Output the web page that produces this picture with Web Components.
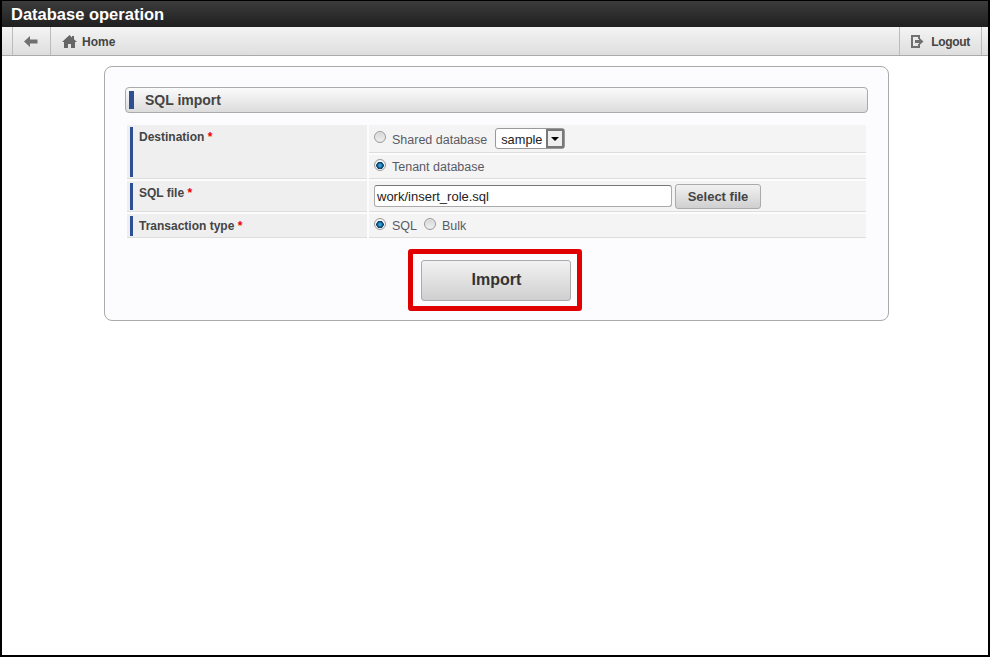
<!DOCTYPE html>
<html lang="en">
<head>
  <meta charset="UTF-8">
  <title>Database operation</title>
  <style type="text/css">
    html, body { margin: 0; height: 100%; background: #fff; }
    body { font-family: "Liberation Sans", Arial, sans-serif; }
  </style>
</head>
<body>
  <app-shell>
    <title-bar slot="top">Database operation</title-bar>
    <tool-bar slot="top">
      <tool-button slot="left" icon="back"></tool-button>
      <tool-button slot="left" icon="home">Home</tool-button>
      <tool-button slot="right" icon="logout" style="--gap: 7px; letter-spacing: -.3px">Logout</tool-button>
    </tool-bar>
    <form-card>
      <section-title slot="title">SQL import</section-title>
      <form-row required>
        <span slot="label">Destination</span>
        <form-line style="--text-shift: 2px">
          <radio-option>Shared database</radio-option>
          <combo-box>sample</combo-box>
        </form-line>
        <form-line short>
          <radio-option checked>Tenant database</radio-option>
        </form-line>
      </form-row>
      <form-row required>
        <span slot="label">SQL file</span>
        <form-line tall>
          <text-box>work/insert_role.sql</text-box>
          <push-button>Select file</push-button>
        </form-line>
      </form-row>
      <form-row required>
        <span slot="label">Transaction type</span>
        <form-line short>
          <radio-option checked>SQL</radio-option>
          <radio-option>Bulk</radio-option>
        </form-line>
      </form-row>
      <highlight-box slot="actions">
        <push-button size="large">Import</push-button>
      </highlight-box>
    </form-card>
  </app-shell>

  <script type="text/javascript">
    const ICONS = {
      back: `<svg width="14" height="11" viewBox="0 0 14 11"><path fill="#707070" d="M0 5.5 6 0v3.5h7.5v4H6V11z"/></svg>`,
      home: `<svg width="15" height="13" viewBox="0 0 15 13"><path fill="#666" d="M7.5 0 10 2.4V1h2v3.3L15 7h-2v6H9V9H6v4H2V7H0z"/></svg>`,
      logout: `<svg width="13" height="13" viewBox="0 0 13 13"><path fill="#707070" d="M0 0h9v4H7V2H2v9h5V9h2v4H0z"/><path fill="#707070" d="M4 5h4V2.5l4.5 4-4.5 4V8H4z"/></svg>`
    }

    function define(name, template) {
      customElements.define(name, class extends HTMLElement {
        constructor() {
          super()
          this.attachShadow({ mode: "open" }).innerHTML = typeof template === "function" ? template(this) : template
        }
      })
    }

    define("app-shell", `
      <style>
        :host { display: flex; flex-direction: column; box-sizing: border-box; height: 657px; border: 2px solid #000; border-top-width: 1px; overflow: hidden; }
        main { flex: 1; padding: 10px 99px 0 102px; }
      </style>
      <slot name="top"></slot>
      <main><slot></slot></main>
    `)

    define("title-bar", `
      <style>
        :host { display: block; height: 26px; box-sizing: border-box; padding: 3px 9px 0; background: linear-gradient(#3c3c3c, #1f1f1f); color: #fff; font: bold 16.5px/20px "Liberation Sans", Arial, sans-serif; }
      </style>
      <slot></slot>
    `)

    define("tool-bar", `
      <style>
        :host { display: flex; justify-content: space-between; height: 29px; box-sizing: border-box; padding: 0 6px 0 10px; background: linear-gradient(#f4f4f4, #dedede); border-bottom: 1px solid #aaa; }
        div { display: flex; }
      </style>
      <div><slot name="left"></slot></div>
      <div><slot name="right"></slot></div>
    `)

    define("tool-button", el => `
      <style>
        :host { display: flex; align-items: center; gap: var(--gap, 5px); padding: 1px 11px 0; border-left: 1px solid #bbb; color: #444; font: bold 12px "Liberation Sans", Arial, sans-serif; }
        :host(:last-child) { border-right: 1px solid #bbb; }
        :host([icon="back"]) { padding: 1px 12px 0 11px; }
        svg { display: block; }
      </style>
      ${ICONS[el.getAttribute("icon")]}<slot></slot>
    `)

    define("form-card", `
      <style>
        :host { display: block; box-sizing: border-box; width: 785px; height: 255px; padding: 20px 20px 0; background: #fcfcff; border: 1px solid #aaa; border-radius: 8px; }
        .rows { display: flex; flex-direction: column; gap: 2px; margin: 12px 2px 0; }
        .actions { display: flex; justify-content: center; margin: 11px 3px 0 0; }
      </style>
      <slot name="title"></slot>
      <div class="rows"><slot></slot></div>
      <div class="actions"><slot name="actions"></slot></div>
    `)

    define("section-title", `
      <style>
        :host { display: flex; align-items: center; box-sizing: border-box; height: 26px; padding-left: 3px; background: linear-gradient(#fbfbfb, #dcdcdc); border: 1px solid #aaa; border-radius: 4px; color: #444; font: bold 14px "Liberation Sans", Arial, sans-serif; }
        i { width: 5px; height: 18px; margin-right: 11px; background: #2f4f94; }
      </style>
      <i></i><slot></slot>
    `)

    define("form-row", `
      <style>
        :host { display: grid; grid-template-columns: 240px 497px; column-gap: 2px; }
        .label { background: #efefef; border-bottom: 1px solid #ddd; padding: 2px 0 1px 3px; }
        .label > div { box-sizing: border-box; height: 100%; padding: 3px 0 0 6px; border-left: 3px solid #2f4f94; color: #444; font: bold 12px/14px "Liberation Sans", Arial, sans-serif; }
        b { color: #e00; }
        .lines { display: flex; flex-direction: column; gap: 2px; }
      </style>
      <div class="label"><div><slot name="label"></slot> <b>*</b></div></div>
      <div class="lines"><slot></slot></div>
    `)

    define("form-line", `
      <style>
        :host { display: flex; align-items: center; gap: 8px; box-sizing: border-box; height: 28px; padding: 0 5px; background: #f4f4f4; border-bottom: 1px solid #ddd; }
        :host([short]) { height: 24px; gap: 7px; }
        :host([tall]) { height: 31px; gap: 3px; }
      </style>
      <slot></slot>
    `)

    define("radio-option", `
      <style>
        :host { display: inline-flex; align-items: center; gap: 6px; color: #5a5a66; font: 12.5px "Liberation Sans", Arial, sans-serif; }
        i { box-sizing: border-box; width: 12px; height: 12px; margin-top: -3px; border: 1px solid #9a9a9a; border-radius: 50%; background: linear-gradient(#d4d4d4, #f2f2f2); box-shadow: inset 0 0 0 1px #e8e8e8; }
        :host([checked]) i { background: radial-gradient(circle at 50% 55%, #3b9ed6 0 1px, #0b5a8c 2.5px, #123c5c 3.5px, #f4f4f4 4px); box-shadow: none; }
        div { margin-top: var(--text-shift, 0); }
      </style>
      <i></i><div><slot></slot></div>
    `)

    define("combo-box", `
      <style>
        :host { display: inline-flex; align-items: center; justify-content: space-between; box-sizing: border-box; width: 70px; height: 21px; padding: 0 0 0 5px; background: #fff; border: 1px solid #999; border-radius: 3px; color: #222; font: 12.8px "Liberation Sans", Arial, sans-serif; }
        span { display: flex; align-items: center; justify-content: center; box-sizing: border-box; width: 18px; height: 19px; background: #eee; border: 2px solid #777; }
        span::after { content: ""; border: 4px solid transparent; border-top: 4px solid #000; border-bottom: 0; }
        div { margin-top: var(--text-shift, 0); }
      </style>
      <div><slot></slot></div><span></span>
    `)

    define("text-box", `
      <style>
        :host { display: flex; align-items: center; box-sizing: border-box; width: 298px; height: 22px; padding: 0 2px; background: #fff; border: 1px solid #aaa; border-top-color: #777; border-radius: 3px; color: #222; font: 13px "Liberation Sans", Arial, sans-serif; }
      </style>
      <slot></slot>
    `)

    define("push-button", `
      <style>
        :host { display: inline-flex; align-items: center; justify-content: center; box-sizing: border-box; width: 86px; height: 25px; background: linear-gradient(#f2f2f2, #cfcfcf); border: 1px solid #aaa; border-radius: 3px; color: #444; font: bold 13px "Liberation Sans", Arial, sans-serif; }
        :host([size="large"]) { width: 150px; height: 41px; padding: 0 0 2px 1px; color: #333; font-size: 16px; }
      </style>
      <slot></slot>
    `)

    define("highlight-box", `
      <style>
        :host { display: block; padding: 6px 6px 5px 8px; border: 5px solid #e00000; border-radius: 3px; }
      </style>
      <slot></slot>
    `)
  </script>
</body>
</html>
